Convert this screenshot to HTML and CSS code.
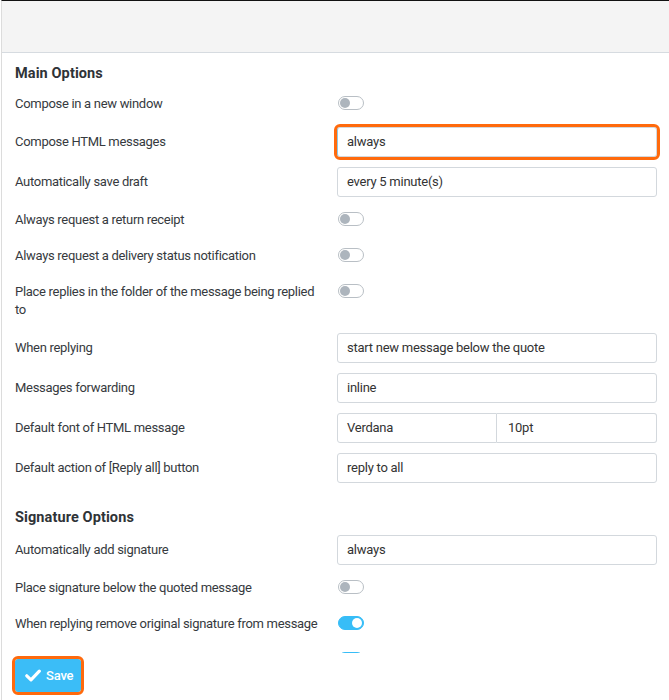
FILE: index.html
```html
<!DOCTYPE html>
<html>
<head>
<meta charset="utf-8">
<link rel="stylesheet" href="styles.css">
</head>
<body>
<div class="frame">
  <div class="header"></div>
  <div class="scroll">
    <section class="group">
      <h2 class="legend">Main Options</h2>
      <div class="row trow"><div class="label">Compose in a new window</div><div class="value"><span class="switch"></span></div></div>
      <div class="row irow"><div class="label">Compose HTML messages</div><div class="value"><div class="field hl">always</div></div></div>
      <div class="row irow"><div class="label">Automatically save draft</div><div class="value"><div class="field">every 5 minute(s)</div></div></div>
      <div class="row trow"><div class="label">Always request a return receipt</div><div class="value"><span class="switch"></span></div></div>
      <div class="row trow"><div class="label">Always request a delivery status notification</div><div class="value"><span class="switch"></span></div></div>
      <div class="row trow"><div class="label">Place replies in the folder of the message being replied to</div><div class="value"><span class="switch"></span></div></div>
      <div class="row irow"><div class="label">When replying</div><div class="value"><div class="field">start new message below the quote</div></div></div>
      <div class="row irow"><div class="label">Messages forwarding</div><div class="value"><div class="field">inline</div></div></div>
      <div class="row irow"><div class="label">Default font of HTML message</div><div class="value split"><div class="field left">Verdana</div><div class="field right">10pt</div></div></div>
      <div class="row irow"><div class="label">Default action of [Reply all] button</div><div class="value"><div class="field">reply to all</div></div></div>
    </section>
    <section class="group">
      <h2 class="legend">Signature Options</h2>
      <div class="row irow"><div class="label">Automatically add signature</div><div class="value"><div class="field">always</div></div></div>
      <div class="row trow"><div class="label">Place signature below the quoted message</div><div class="value"><span class="switch"></span></div></div>
      <div class="row trow"><div class="label">When replying remove original signature from message</div><div class="value"><span class="switch on"></span></div></div>
      <div class="row trow"><div class="label"></div><div class="value"><span class="switch on"></span></div></div>
    </section>
  </div>
  <div class="footer">
    <button class="save"><svg class="check" width="16" height="13" viewBox="0 0 16 13"><path d="M1.8 6.8 L6 10.8 L14.3 2.2" fill="none" stroke="#fff" stroke-width="3.2" stroke-linecap="round" stroke-linejoin="round"/></svg><span class="save-text">Save</span></button>
  </div>
</div>
</body>
</html>
```
FILE: styles.css
```css
html, body {
  margin: 0;
  padding: 0;
  background: #fff;
}
body {
  font-family: Roboto, "Liberation Sans", Arial, sans-serif;
  font-size: 13px;
  color: #333;
}
.frame {
  height: 699px;
  margin-left: 1px;
  border-top: 1px solid #111;
  border-left: 1px solid #dcdcdc;
  display: flex;
  flex-direction: column;
  overflow: hidden;
}
.header {
  flex: none;
  height: 51px;
  background: #f4f4f4;
  border-bottom: 1px solid #d6dbe0;
}
.scroll {
  flex: none;
  height: 600px;
  overflow: hidden;
  padding: 0 12px 0 13px;
}
.legend {
  margin: 0;
  padding: 12px 0 3px;
  font-size: 14.5px;
  font-weight: 700;
  line-height: 18px;
  color: #2f3337;
  letter-spacing: 0.1px;
}
.group + .group {
  margin-top: 9px;
}
.row {
  display: flex;
}
.trow {
  padding: 9px 0;
  align-items: flex-start;
}
.irow {
  padding: 5px 0;
  align-items: center;
}
.label {
  flex: none;
  width: 312px;
  min-height: 18px;
  padding-right: 10px;
  line-height: 18px;
  color: #363a3e;
  letter-spacing: -0.3px;
}
.value {
  flex: none;
  width: 320px;
}
.trow .value {
  height: 16px;
  display: flex;
  align-items: center;
}
.field {
  height: 30px;
  box-sizing: border-box;
  border: 1px solid #d3d8dd;
  border-radius: 3px;
  padding: 0 9px;
  line-height: 28px;
  color: #333;
  background: #fff;
  letter-spacing: -0.25px;
  white-space: nowrap;
}
.field.hl {
  outline: 3px solid #ff6a0d;
  outline-offset: 0;
  border-left-color: #8cc8e6;
}
.split {
  display: flex;
}
.split .left {
  width: 160px;
  border-radius: 3px 0 0 3px;
}
.split .right {
  flex: 1;
  border-left: none;
  border-radius: 0 3px 3px 0;
  padding-left: 11px;
}
.switch {
  position: relative;
  display: block;
  width: 26px;
  height: 14px;
  box-sizing: border-box;
  margin-left: 1px;
  border: 1px solid #b9bfc5;
  border-radius: 7px;
  background: #fff;
}
.switch::after {
  content: "";
  position: absolute;
  top: 1px;
  left: 1px;
  width: 10px;
  height: 10px;
  border-radius: 50%;
  background: #adb5bd;
}
.switch.on {
  background: #37bdf7;
  border-color: #37bdf7;
}
.switch.on::after {
  left: auto;
  right: 1px;
  background: #fff;
}
.footer {
  flex: 1;
  padding: 6px 0 0 13px;
}
.save {
  display: flex;
  align-items: center;
  gap: 5px;
  height: 33px;
  padding: 0 8px 0 10px;
  box-sizing: border-box;
  border: none;
  border-radius: 3px;
  background: #3bbdf7;
  color: #fff;
  font-family: Roboto, "Liberation Sans", Arial, sans-serif;
  font-size: 13px;
  font-weight: 500;
  white-space: nowrap;
  outline: 3px solid #ff6a0d;
  outline-offset: 0;
}
.check {
  flex: none;
}
.save-text {
  letter-spacing: -0.2px;
}
```
